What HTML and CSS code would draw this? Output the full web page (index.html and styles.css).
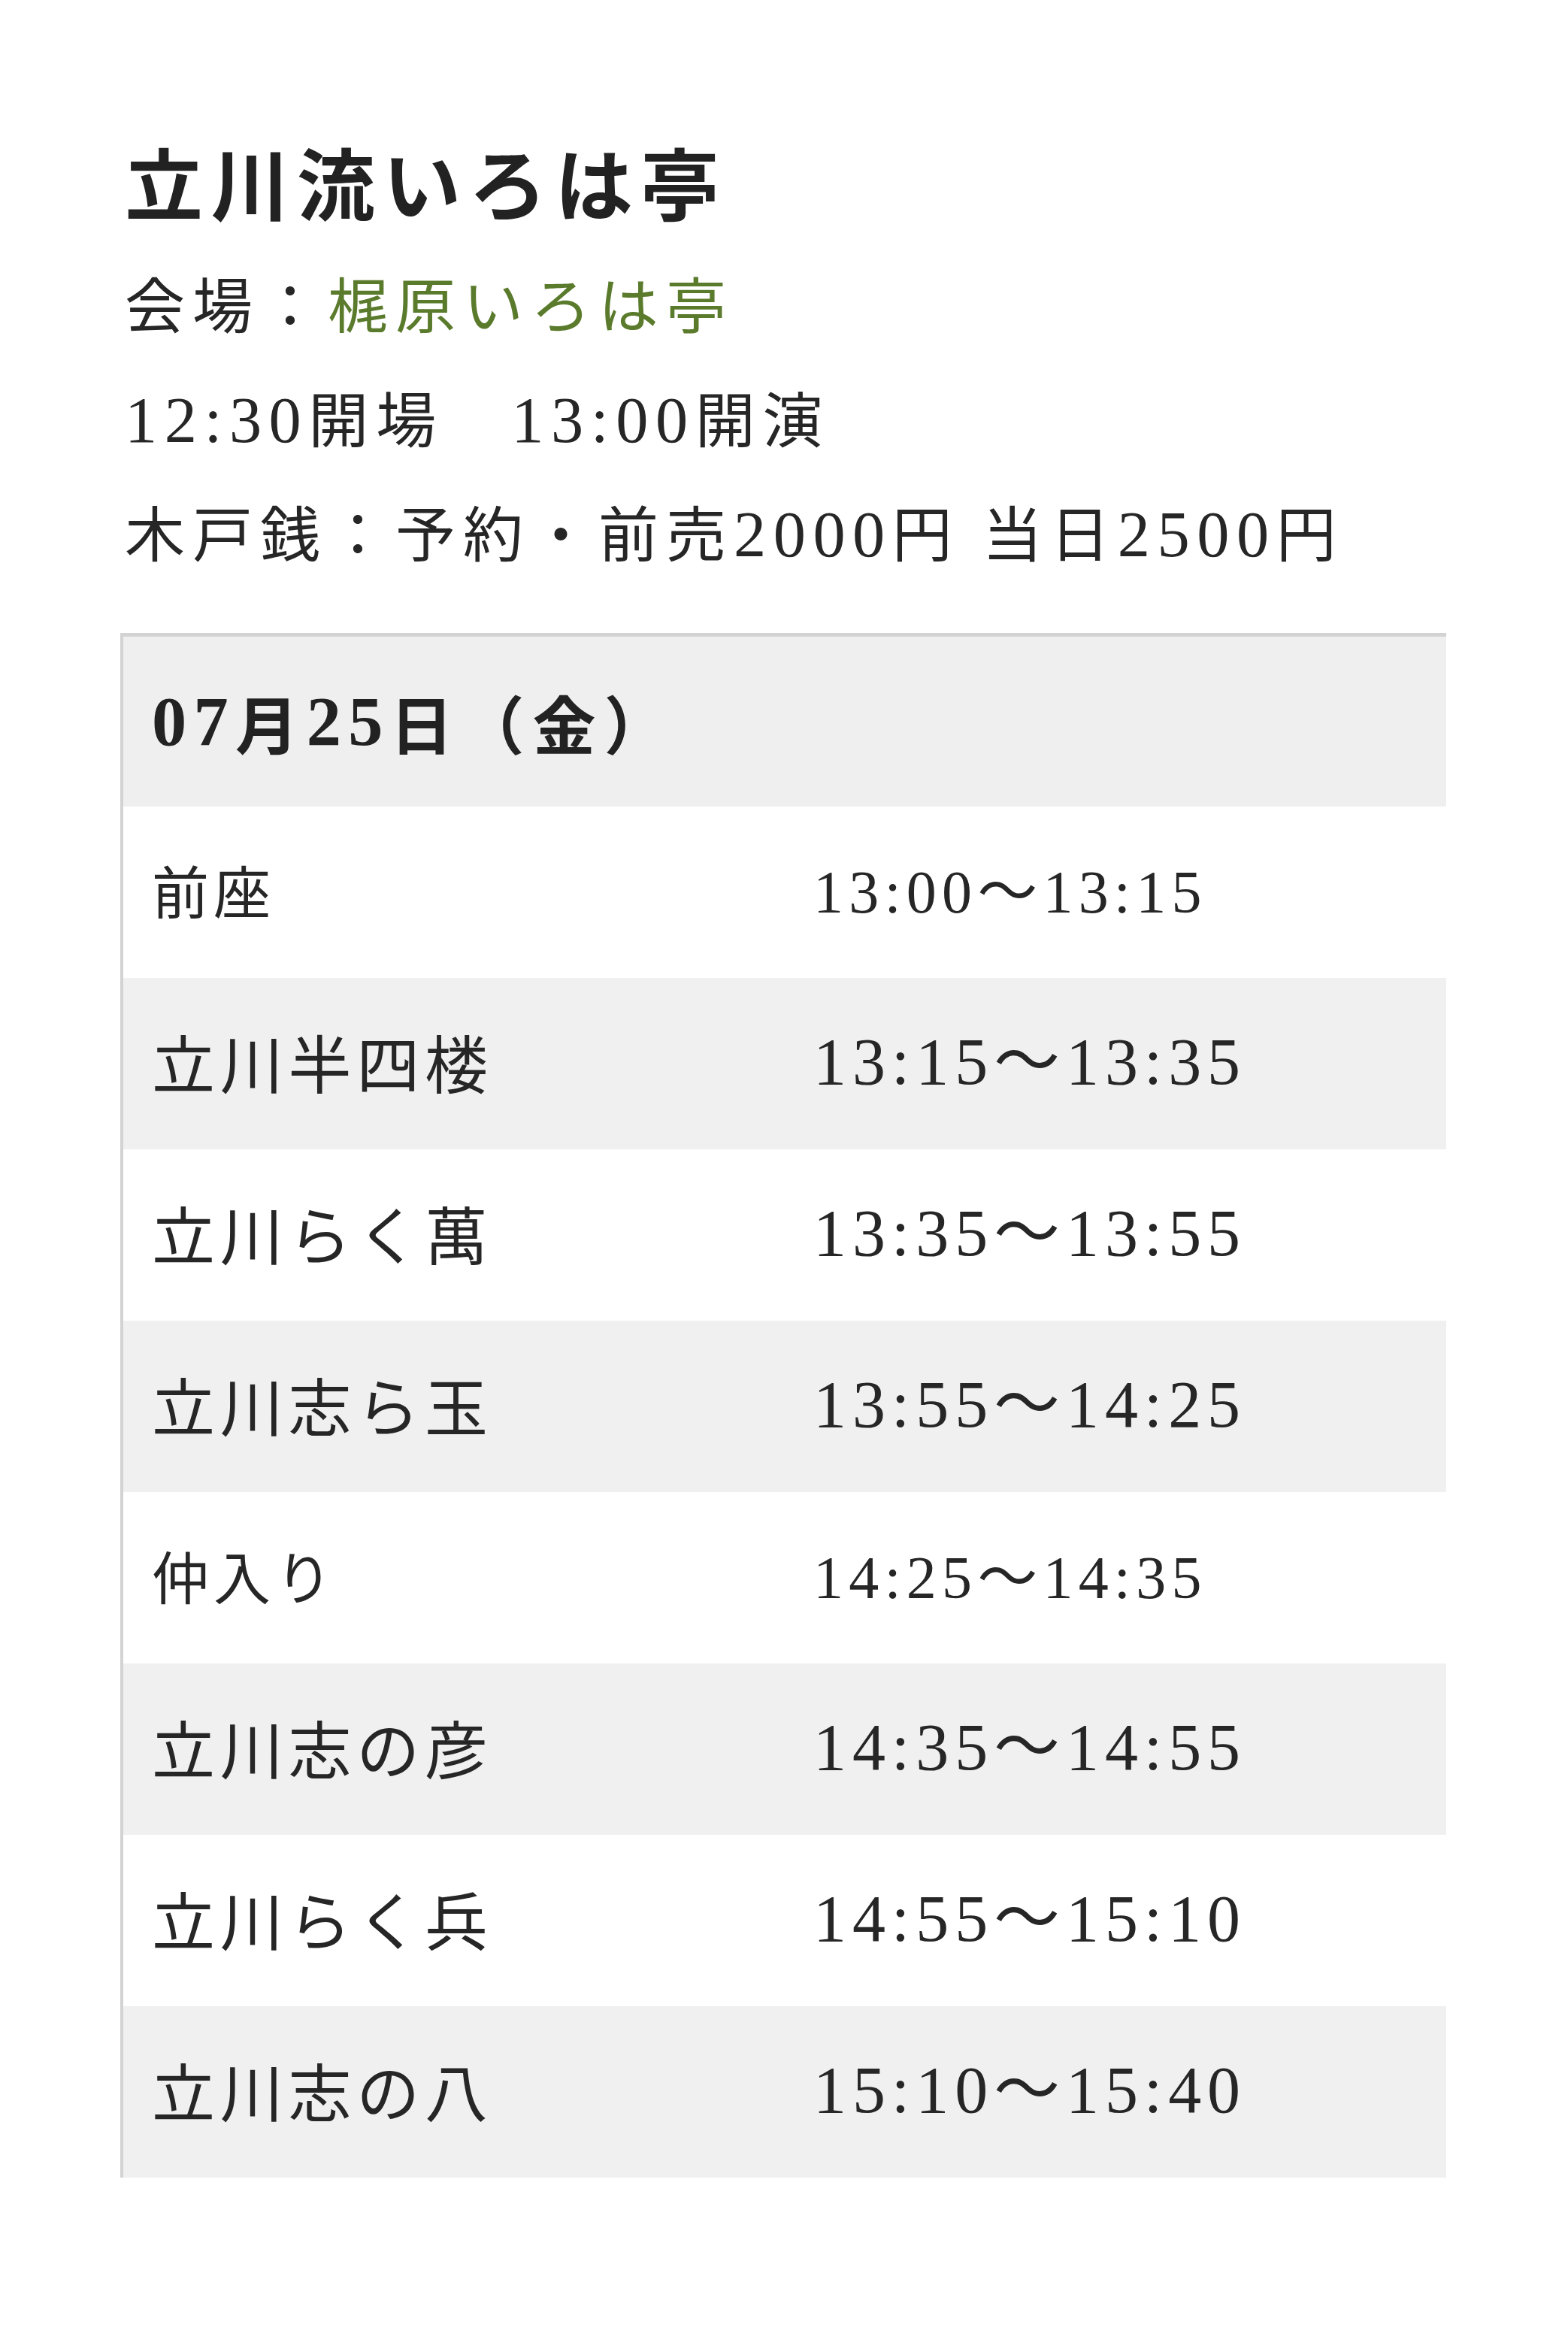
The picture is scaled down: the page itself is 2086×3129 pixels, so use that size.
FILE: index.html
```html
<!DOCTYPE html>
<html lang="ja">
<head>
<meta charset="utf-8">
<title>立川流いろは亭</title>
<link rel="stylesheet" href="styles.css">
</head>
<body>
<main class="page">
  <section class="event">
    <h1 class="event-title">立川流いろは亭</h1>
    <p class="event-line">会場：<a class="venue" href="#">梶原いろは亭</a></p>
    <p class="event-line"><span class="num">12:30</span>開場　<span class="num">13:00</span>開演</p>
    <p class="event-line">木戸銭：予約・前売<span class="num">2000</span>円 当日<span class="num">2500</span>円</p>
  </section>

  <div class="schedule">
    <div class="schedule-head"><span class="num">07</span>月<span class="num">25</span>日（金）</div>
    <div class="schedule-row minor">
      <div class="name">前座</div>
      <div class="time">13:00〜13:15</div>
    </div>
    <div class="schedule-row alt">
      <div class="name">立川半四楼</div>
      <div class="time">13:15〜13:35</div>
    </div>
    <div class="schedule-row">
      <div class="name">立川らく萬</div>
      <div class="time">13:35〜13:55</div>
    </div>
    <div class="schedule-row alt">
      <div class="name">立川志ら玉</div>
      <div class="time">13:55〜14:25</div>
    </div>
    <div class="schedule-row minor">
      <div class="name">仲入り</div>
      <div class="time">14:25〜14:35</div>
    </div>
    <div class="schedule-row alt">
      <div class="name">立川志の彦</div>
      <div class="time">14:35〜14:55</div>
    </div>
    <div class="schedule-row">
      <div class="name">立川らく兵</div>
      <div class="time">14:55〜15:10</div>
    </div>
    <div class="schedule-row alt">
      <div class="name">立川志の八</div>
      <div class="time">15:10〜15:40</div>
    </div>
  </div>
</main>
</body>
</html>
```

FILE: styles.css
```css
html, body {
  margin: 0;
  padding: 0;
  background: #ffffff;
}

body {
  font-family: "Liberation Serif", "Noto Sans CJK JP", serif;
  color: #262626;
}

.page {
  padding: 176px 162px 200px 160px;
}

.event {
  padding-left: 6px;
  margin-bottom: 54px;
}

.event-title {
  margin: 0 0 8px 0;
  font-size: 104px;
  line-height: 150px;
  font-weight: 700;
  letter-spacing: 0.1em;
  color: #222222;
}

.event-line {
  margin: 0;
  font-size: 80px;
  line-height: 150px;
  letter-spacing: 0.125em;
  color: #262626;
}

.event-line .num {
  font-size: 1.08em;
  letter-spacing: 0.11em;
}

.venue {
  color: #5a7a2c;
  text-decoration: none;
}

.schedule {
  width: 1764px;
  box-sizing: border-box;
  border-top: 5px solid #d3d3d3;
  border-left: 4px solid #d3d3d3;
}

.schedule-head {
  height: 226px;
  display: flex;
  align-items: center;
  padding-left: 38px;
  background: #efefef;
  font-size: 84px;
  font-weight: 700;
  letter-spacing: 0.13em;
  color: #222222;
}

.schedule-head .num {
  font-size: 1.1em;
  letter-spacing: 0.1em;
}

.schedule-row {
  height: 228px;
  display: grid;
  grid-template-columns: 878px 1fr;
  align-items: center;
  background: #ffffff;
  color: #262626;
}

.schedule-row.alt {
  background: #f0f0f0;
}

.name {
  padding-left: 38px;
  padding-bottom: 8px;
  font-size: 84px;
  letter-spacing: 0.08em;
}

.time {
  padding-left: 40px;
  padding-bottom: 24px;
  font-size: 88px;
  letter-spacing: 0.09em;
}

.schedule-row.minor .name {
  font-size: 76px;
}

.schedule-row.minor .time {
  padding-bottom: 16px;
  font-size: 80px;
}
```
